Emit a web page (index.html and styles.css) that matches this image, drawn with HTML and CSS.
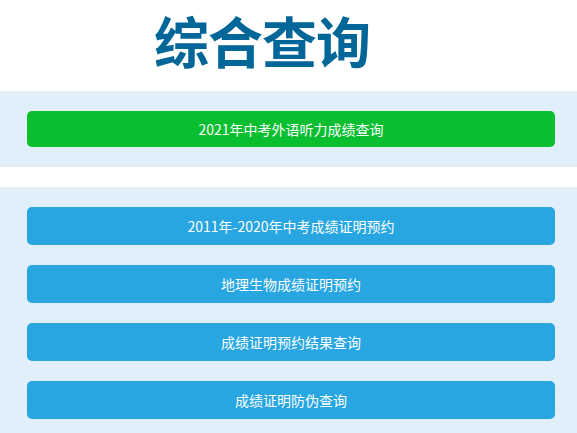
FILE: index.html
```html
<!DOCTYPE html>
<html lang="zh-CN">
<head>
<meta charset="utf-8">
<title>综合查询</title>
<link rel="stylesheet" href="styles.css">
</head>
<body>
<div class="header">
  <h1 class="title">综合查询</h1>
</div>
<div class="panel">
  <a class="btn btn-green" href="#">2021年中考外语听力成绩查询</a>
</div>
<div class="panel panel-list">
  <a class="btn btn-blue" href="#">2011年-2020年中考成绩证明预约</a>
  <a class="btn btn-blue" href="#">地理生物成绩证明预约</a>
  <a class="btn btn-blue" href="#">成绩证明预约结果查询</a>
  <a class="btn btn-blue" href="#">成绩证明防伪查询</a>
</div>
</body>
</html>
```
FILE: styles.css
```css
html, body {
  margin: 0;
  padding: 0;
  background: #ffffff;
  font-family: "Noto Sans CJK SC", "Noto Sans", sans-serif;
}
.header {
  height: 91px;
  box-sizing: border-box;
  display: flex;
  align-items: flex-start;
  padding: 6px 0 0 154px;
}
.title {
  margin: 0;
  font-size: 55px;
  line-height: 1.2;
  font-weight: 700;
  color: #026699;
  letter-spacing: -1px;
}
.panel {
  background: #e1effb;
  padding: 20px 22px 20px 27px;
  display: flex;
  flex-direction: column;
  gap: 20px;
}
.panel-list {
  margin-top: 20px;
}
.btn {
  display: flex;
  align-items: center;
  justify-content: center;
  border-radius: 5px;
  color: #ffffff;
  font-size: 14px;
  text-decoration: none;
}
.btn-green {
  height: 36px;
  background: #09be2f;
}
.btn-blue {
  height: 38px;
  background: #27a6e2;
}
```
